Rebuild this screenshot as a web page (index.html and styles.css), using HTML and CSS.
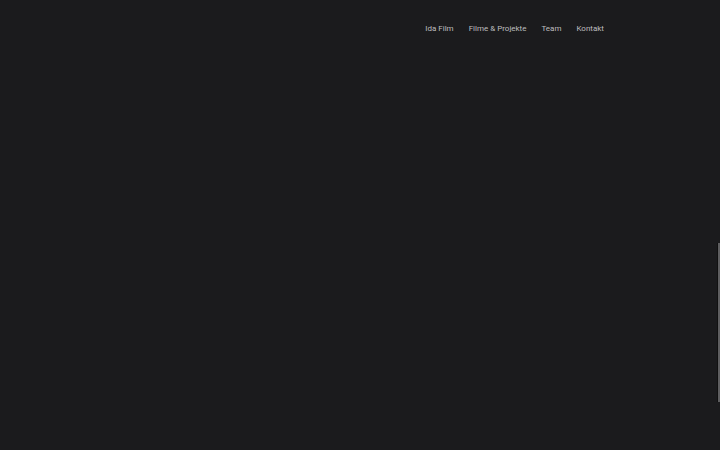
FILE: index.html
```html
<!DOCTYPE html>
<html lang="de">
<head>
  <meta charset="UTF-8" />
  <meta name="viewport" content="width=device-width, initial-scale=1.0"/>
  <title>Ida Film</title>
  <link rel="stylesheet" href="styles.css">
</head>
<body>

  <!-- Navigation -->
  <header class="site-header">
    <nav>
      <ul>
        <li><a href="#">Ida Film</a></li>
        <li><a href="#">Filme &amp; Projekte</a></li>
        <li><a href="#">Team</a></li>
        <li><a href="#">Kontakt</a></li>
      </ul>
    </nav>
  </header>

  <main class="stage"></main>

  <!-- slider handle on the right edge -->
  <div class="edge-handle"></div>

</body>
</html>
```

FILE: styles.css
```css
html, body {
  margin: 0;
  padding: 0;
  height: 100%;
}

body {
  font-family: Roboto, "Liberation Sans", Arial, sans-serif;
  background: #1b1b1d;
  overflow: hidden;
}

.site-header {
  display: flex;
  justify-content: flex-end;
  padding: 23px 116px 0 0;
}

nav ul {
  list-style-type: none;
  margin: 0;
  padding: 0;
  display: flex;
  gap: 15px;
}

nav a {
  display: block;
  color: #bdbdbf;
  text-decoration: none;
  font-size: 8px;
  line-height: 12px;
}

nav a:hover {
  color: #fff;
}

.stage {
  height: 380px;
}

.edge-handle {
  position: fixed;
  right: 0;
  top: 243px;
  width: 2px;
  height: 159px;
  background: #5e5e60;
  border-left: 1px solid #111;
}
```
